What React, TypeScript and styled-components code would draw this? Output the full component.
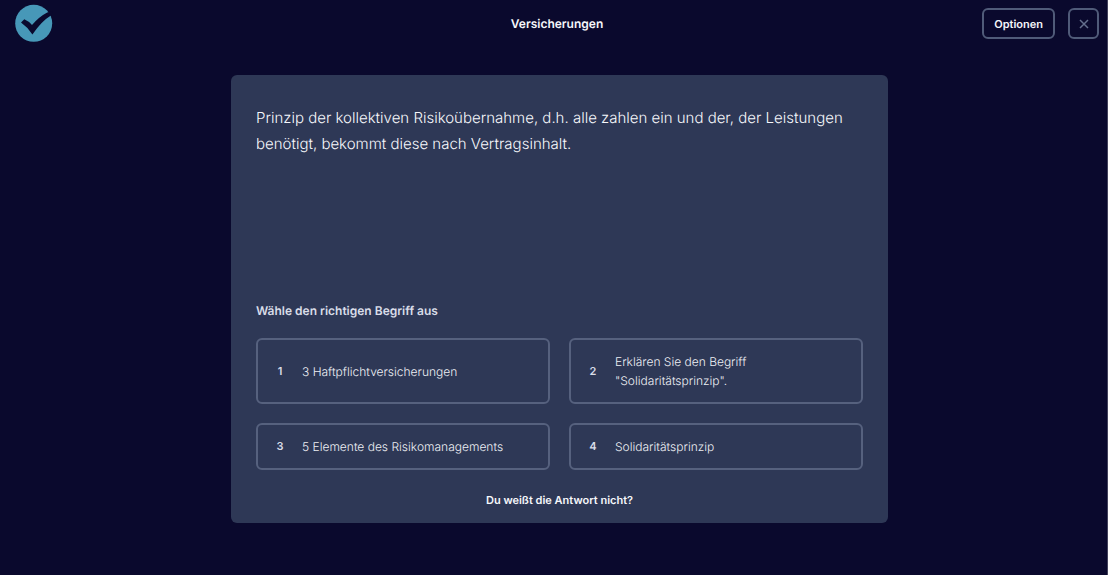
import React from "react";
import styled, { createGlobalStyle } from "styled-components";

const GlobalStyle = createGlobalStyle`
  *, *::before, *::after { box-sizing: border-box; }
  body {
    margin: 0;
    background: #0a092d;
    color: #f6f7fb;
    font-family: Inter, "Liberation Sans", sans-serif;
    text-rendering: geometricPrecision;
  }
  button { font-family: inherit; text-rendering: inherit; cursor: pointer; }
`;

const Page = styled.div`
  min-height: 100vh;
  border-right: 1px solid #43425c;
`;

const Header = styled.header`
  display: grid;
  grid-template-columns: 1fr auto 1fr;
  align-items: center;
  padding: 4px 8px 4px 15px;
`;

const HomeLink = styled.a`
  display: flex;
  justify-self: start;
  border-radius: 50%;
`;

const Title = styled.h1`
  margin: 0;
  font-size: 12px;
  line-height: 20px;
  font-weight: 600;
`;

const Actions = styled.div`
  display: flex;
  justify-content: flex-end;
  gap: 13px;
`;

const OutlineButton = styled.button<{ $square?: boolean }>`
  display: flex;
  align-items: center;
  justify-content: center;
  height: 31px;
  width: ${({ $square }) => ($square ? "31px" : "auto")};
  padding: ${({ $square }) => ($square ? "0" : "0 10px")};
  border: 2px solid #505b79;
  border-radius: 6px;
  background: transparent;
  color: ${({ $square }) => ($square ? "#646f8d" : "#f6f7fb")};
  font-size: 11px;
  font-weight: 600;
`;

const Main = styled.main`
  padding: 28px 16px 52px 28px;
`;

const Card = styled.section`
  display: flex;
  flex-direction: column;
  max-width: 657px;
  min-height: 448px;
  margin: 0 auto;
  padding: 30px 25px 13px;
  border-radius: 6px;
  background: #2e3856;
`;

const Question = styled.p`
  flex: 1;
  margin: 0;
  font-size: 15px;
  line-height: 26px;
  font-weight: 350;
`;

const Prompt = styled.h2`
  margin: 0 0 17px;
  color: #d9dde8;
  font-size: 12px;
  line-height: 20px;
  font-weight: 600;
`;

const Options = styled.div`
  display: grid;
  grid-template-columns: repeat(auto-fit, minmax(240px, 1fr));
  gap: 19px;
`;

const Option = styled.button`
  display: grid;
  grid-template-columns: 16px 1fr;
  align-items: center;
  gap: 14px;
  min-height: 47px;
  padding: 12px 14px;
  border: 2px solid #56617e;
  border-radius: 6px;
  background: transparent;
  color: #edeff4;
  text-align: left;
`;

const OptionNumber = styled.span`
  color: #d9dde8;
  font-size: 11px;
  line-height: 19px;
  font-weight: 600;
  text-align: center;
`;

const OptionText = styled.span`
  font-size: 12px;
  line-height: 19px;
  font-weight: 350;
  white-space: pre-line;
`;

const SkipButton = styled.button`
  align-self: center;
  margin-top: 20px;
  padding: 0 12px;
  border: 0;
  background: transparent;
  color: #f6f7fb;
  font-size: 11px;
  line-height: 20px;
  font-weight: 600;
`;

const options = [
  "3 Haftpflichtversicherungen",
  'Erklären Sie den Begriff\n"Solidaritätsprinzip".',
  "5 Elemente des Risikomanagements",
  "Solidaritätsprinzip",
];

const CheckLogo = () => (
  <svg width="38" height="39" viewBox="0 0 38 39" aria-hidden="true">
    <circle cx="18.7" cy="19.3" r="18.5" fill="#4798b8" />
    <path
      d="M6 18.6 L9.3 15.2 Q14 17.2 17 21 Q23.5 13 32.2 8.4 L38 7 L36.6 11 Q26 17.5 17.4 30.6 Q13 23.5 6 18.6 Z"
      fill="#0a092d"
    />
  </svg>
);

const CloseIcon = () => (
  <svg width="10" height="10" viewBox="0 0 10 10" aria-hidden="true">
    <path d="M1 1 L9 9 M9 1 L1 9" stroke="currentColor" strokeWidth="1.5" />
  </svg>
);

export default function App() {
  return (
    <Page>
      <GlobalStyle />
      <Header>
        <HomeLink href="#" aria-label="Startseite">
          <CheckLogo />
        </HomeLink>
        <Title>Versicherungen</Title>
        <Actions>
          <OutlineButton type="button">Optionen</OutlineButton>
          <OutlineButton type="button" $square aria-label="Schließen">
            <CloseIcon />
          </OutlineButton>
        </Actions>
      </Header>
      <Main>
        <Card>
          <Question>
            Prinzip der kollektiven Risikoübernahme, d.h. alle zahlen ein und
            der, der Leistungen benötigt, bekommt diese nach Vertragsinhalt.
          </Question>
          <Prompt>Wähle den richtigen Begriff aus</Prompt>
          <Options>
            {options.map((text, index) => (
              <Option type="button" key={text}>
                <OptionNumber>{index + 1}</OptionNumber>
                <OptionText>{text}</OptionText>
              </Option>
            ))}
          </Options>
          <SkipButton type="button">Du weißt die Antwort nicht?</SkipButton>
        </Card>
      </Main>
    </Page>
  );
}
